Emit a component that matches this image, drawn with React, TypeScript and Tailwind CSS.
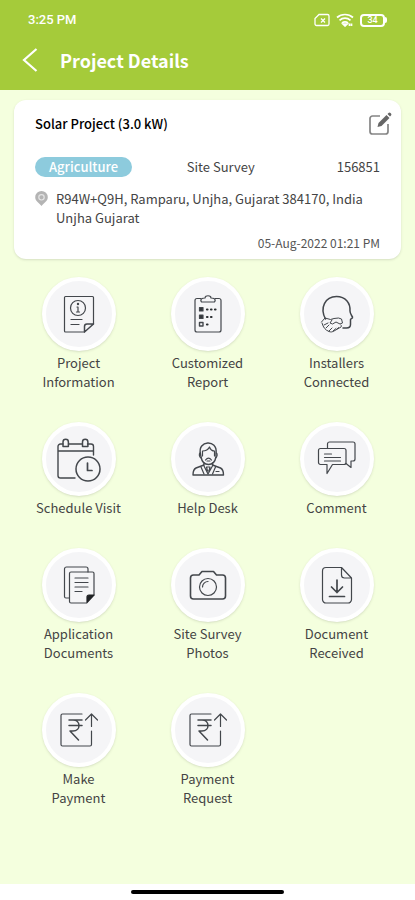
import type { ReactNode } from "react";

type Action = {
  label: string;
  icon: ReactNode;
};

function Glyph({ children }: { children: ReactNode }) {
  return (
    <svg
      aria-hidden
      viewBox="0 0 48 48"
      className="size-12"
      fill="none"
      stroke="#43474c"
      strokeWidth="1.2"
      strokeLinecap="round"
      strokeLinejoin="round"
    >
      {children}
    </svg>
  );
}

const infoIcon = (
  <Glyph>
    <path d="M29.500 42H10.500a1 1 0 0 1-1-1V7.500a1 1 0 0 1 1-1h27a1 1 0 0 1 1 1V34" />
    <path d="M29.500 42v-5.500a2.500 2.500 0 0 1 2.500-2.500h6.500z" strokeWidth="1.500" />
    <circle cx="23" cy="18" r="7.500" />
    <path d="M23 17v5M21.500 22h3M22 17h1" />
    <circle cx="23" cy="14" r="0.600" fill="#43474c" />
    <path d="M16 29.500h11M16 34.500h8" />
  </Glyph>
);

const reportIcon = (
  <Glyph>
    <path d="M17 8.500h-4a2 2 0 0 0-2 2V40a2 2 0 0 0 2 2h22a2 2 0 0 0 2-2V10.500a2 2 0 0 0-2-2h-4" />
    <path d="M17.500 12c-2-3 1-4 3.500-4 0-3 6-3 6 0 2.500 0 5.500 1 3.500 4z" />
    <path
      d="M15.500 17.500h3.500v3.500h-3.500zM15.500 25h3.500v3.500h-3.500z"
      fill="#33363a"
    />
    <path d="M15.500 32.500h3.500v3.500h-3.500z" strokeWidth="1.400" />
    <path
      d="M23 19.500h.5M27 19.500h.5M31 19.500h.5M23 27h.5M27 27h.5M23 34.500h.5"
      stroke="#2b2e31"
      strokeWidth="2.200"
    />
  </Glyph>
);

const installersIcon = (
  <Glyph>
    <path
      d="M12.500 29C6.500 18 12 6.500 23.500 6.500c9 0 14 6.500 13.500 14.500 0 2.500 1 3.500 2.500 6 .6 1.500-2 1.500-2 2.500v5c0 2.500-1.500 3.500-4 3.500H30"
      strokeWidth="1.500"
    />
    <path d="m8.500 32 3.500-4 5.500 1.500 3.500-1 4.500-.5 3 1 1 4-2.500 1-4-2-3.500 2-2.500-1 2-3" strokeWidth="1" />
    <path
      d="M9 33c1 4 3 7 7 8.500 2 .8 3 .5 5-.5l7-4c1-1 0-2 0-2M11 35l4-2M13 38l3-3M16 41l3-3M20 41l3-2.500M24 39l1.500-1.500"
      strokeWidth="1"
    />
  </Glyph>
);

const visitIcon = (
  <Glyph>
    <path
      d="M20 43H5.500A2.500 2.500 0 0 1 3 40.500v-29A2.500 2.500 0 0 1 5.500 9H8M13.500 9H27M32.500 9H36a2.500 2.500 0 0 1 2.500 2.500V20M3 16h35.500"
      strokeWidth="1.400"
    />
    <path d="M8 11.500V7a2.700 2.700 0 0 1 5.400 0v4.500zM27.500 11.500V7a2.700 2.700 0 0 1 5.400 0v4.500z" strokeWidth="1.500" />
    <circle cx="33" cy="34" r="12" strokeWidth="1.500" />
    <path d="M32.500 28v7.500H37" strokeWidth="1.700" />
  </Glyph>
);

const helpIcon = (
  <Glyph>
    <path
      d="M16.500 19C13 5 34 4 32 18v4c-1 5-4 7.500-7.500 7.500S18 27 17 22z"
      strokeWidth="1.400"
    />
    <path d="M18.500 21v-5c4 0 6-2 7-4 1 3 3 4 5 4v5M16 18c-1 1-1 4 1 5M32.500 18c1 1 1 4-1 5M21.500 25c2-2.500 4-2.500 6 0M23 26h3" />
    <path d="M20 28v2l-8 3c-2 1-3 4-3 7h30.500c0-3-1-6-3-7l-8-3v-2" strokeWidth="1.400" />
    <path d="m19.500 30 4.500 9 5-9M17 32l3 7M31.500 32l-3 7M22.500 32h3.500l-1 4h-1.500zM32 36.500h3" />
  </Glyph>
);

const commentIcon = (
  <Glyph>
    <path d="M14.500 13V9a2 2 0 0 1 2-2h23.500a2 2 0 0 1 2 2v15a2 2 0 0 1-2 2h-2v6.500L33 28.500" />
    <path d="M7.500 13.500H31a2 2 0 0 1 2 2V27.500a2 2 0 0 1-2 2H19.500L14 38.500v-9H7.500a2 2 0 0 1-2-2V15.500a2 2 0 0 1 2-2z" />
    <path d="M11.500 19h7M11.500 22.500h16M11.500 26h16" />
  </Glyph>
);

const documentsIcon = (
  <Glyph>
    <path d="M14 37h-3a1.500 1.500 0 0 1-1.500-1.500V8a2 2 0 0 1 2-2h19.500a2 2 0 0 1 2 2v3" />
    <path d="M31.500 42H16a1.500 1.500 0 0 1-1.500-1.500v-28A1.500 1.500 0 0 1 16 11h21.500a1.500 1.500 0 0 1 1.500 1.500V34" />
    <path d="M32 41.500V36a2 2 0 0 1 2-2h5z" fill="#202225" stroke="#202225" />
    <path d="M20 17h13M20 21.500h13M20 26h13M20 30.500h7" />
  </Glyph>
);

const cameraIcon = (
  <Glyph>
    <path
      d="M9.500 14h5.500l3-3.500h11.500l3 3.500h6a3 3 0 0 1 3 3V35a3 3 0 0 1-3 3h-29a3 3 0 0 1-3-3V17a3 3 0 0 1 3-3z"
      strokeWidth="1.600"
    />
    <circle cx="24" cy="26" r="8.500" />
    <path d="M18.500 26a5.500 5.500 0 0 1 5.500-5.500" />
  </Glyph>
);

const receivedIcon = (
  <Glyph>
    <path d="M28.500 6.500H13A3.500 3.500 0 0 0 9.500 10v28.500A3.500 3.500 0 0 0 13 42h22a3.500 3.500 0 0 0 3.500-3.500V17zM28.500 6.500V14a3 3 0 0 0 3 3h7" />
    <path d="M24 19v12.500M18.500 26l5.500 5.500 5.500-5.500M16.500 35.500h15" strokeWidth="1.700" />
  </Glyph>
);

const rupeeIcon = (
  <Glyph>
    <path d="M27 8H7.500a1.500 1.500 0 0 0-1.500 1.500v29A1.500 1.500 0 0 0 7.500 40H35a1.500 1.500 0 0 0 1.500-1.500V25M36.500 20.500V8.500M30.500 14l6-6 6 6" />
    <path
      d="M14 14h13M14 19.500h13M14 14h4c8 0 8 11 0 11h-3l8.500 9"
      strokeWidth="1.500"
    />
  </Glyph>
);

const actions: Action[] = [
  { label: "Project Information", icon: infoIcon },
  { label: "Customized Report", icon: reportIcon },
  { label: "Installers Connected", icon: installersIcon },
  { label: "Schedule Visit", icon: visitIcon },
  { label: "Help Desk", icon: helpIcon },
  { label: "Comment", icon: commentIcon },
  { label: "Application Documents", icon: documentsIcon },
  { label: "Site Survey Photos", icon: cameraIcon },
  { label: "Document Received", icon: receivedIcon },
  { label: "Make Payment", icon: rupeeIcon },
  { label: "Payment Request", icon: rupeeIcon },
];

function StatusBar() {
  return (
    <div className="flex h-10 items-center justify-between px-7 font-[Roboto,sans-serif] text-[13px] font-medium">
      <span>3:25 PM</span>
      <div className="flex items-center gap-1.5">
        <svg aria-hidden viewBox="0 0 16 13" className="h-3.5 w-4" fill="none" stroke="currentColor" strokeWidth="1.300">
          <path d="M5 1h8.500a1.500 1.500 0 0 1 1.500 1.500v8a1.500 1.500 0 0 1-1.500 1.500h-11A1.500 1.500 0 0 1 1 10.500V5z" />
          <path d="m7 5 4 4M11 5 7 9" />
        </svg>
        <svg aria-hidden viewBox="0 0 18 14" className="h-3.5 w-[18px]" fill="none" stroke="currentColor" strokeWidth="1.700">
          <path d="M1 4.500c4.500-4 11.500-4 16 0M3.500 7.300c3.200-2.800 7.800-2.800 11 0M6 10c2-1.600 4-1.600 6 0" />
          <path d="m9 13-2-2h4zM13.500 10.500v2.500M15.500 10.500v2.500" />
        </svg>
        <span className="flex items-center">
          <span className="flex h-[13px] w-[25px] items-center justify-center rounded border-2 border-white text-[9px] leading-none font-medium">
            34
          </span>
          <span className="h-1.5 w-0.5 rounded-r bg-white" />
        </span>
      </div>
    </div>
  );
}

function ProjectCard() {
  return (
    <section className="mx-3.5 mt-2.5 flex flex-col rounded-xl bg-white px-[21px] pt-3 pb-1.5 shadow-sm">
      <div className="flex items-center justify-between">
        <h2 className="text-[13px] leading-6 font-medium text-black">Solar Project (3.0 kW)</h2>
        <button type="button" aria-label="Edit project" className="-mr-3">
          <svg aria-hidden viewBox="0 0 24 24" className="size-6" fill="none" stroke="#858585" strokeWidth="1.700">
            <path d="M12 4H4.500A2.500 2.500 0 0 0 2 6.500v13A2.500 2.500 0 0 0 4.500 22h13a2.500 2.500 0 0 0 2.500-2.500V12" />
            <path d="m9.500 15 1-4 8-8 3 3-8 8zM19.500 2l1-1a1.500 1.500 0 0 1 2 0l.5.500a1.500 1.500 0 0 1 0 2l-1 1z" fill="#666" stroke="none" />
          </svg>
        </button>
      </div>
      <div className="mt-[21px] grid grid-cols-[44%_1fr_auto] items-center text-[13px] leading-5">
        <span className="justify-self-start rounded-full bg-[#8dcbdd] px-3.5 font-medium text-white">
          Agriculture
        </span>
        <span>Site Survey</span>
        <span>156851</span>
      </div>
      <div className="mt-3 flex gap-2 text-[13px] leading-[19px]">
        <svg aria-hidden viewBox="0 0 13 15" className="mt-0.5 h-[15px] w-[13px] shrink-0">
          <path d="M6.500 0a6.300 6.300 0 0 1 6.300 6.300c0 4-4.300 6-6.300 8.700-2-2.700-6.300-4.700-6.300-8.700A6.300 6.300 0 0 1 6.500 0z" fill="#b4b4b4" />
          <circle cx="6.500" cy="6.300" r="2.700" fill="none" stroke="#e4e4e4" strokeWidth="1.200" />
        </svg>
        <address className="not-italic">
          R94W+Q9H, Ramparu, Unjha, Gujarat 384170, India
          <br />
          Unjha Gujarat
        </address>
      </div>
      <time dateTime="2022-08-05T13:21" className="mt-1.5 text-right text-xs leading-5 text-[#555]">
        05-Aug-2022 01:21 PM
      </time>
    </section>
  );
}

export default function App() {
  return (
    <div className="flex min-h-screen flex-col bg-[#f4ffde] font-['Noto_Sans_CJK_SC',sans-serif] text-[#444]">
      <header className="bg-[#a5cb3a] text-white">
        <StatusBar />
        <div className="flex h-[50px] items-start gap-5 px-5">
          <button type="button" aria-label="Go back" className="flex h-10 items-center">
            <svg aria-hidden viewBox="0 0 20 26" className="h-[26px] w-5" fill="none" stroke="currentColor" strokeWidth="2.200">
              <path d="M16.500 2 4 13l12.500 11" />
            </svg>
          </button>
          <h1 className="text-lg leading-10 font-bold">Project Details</h1>
        </div>
      </header>

      <main className="flex-1">
        <ProjectCard />
        <nav aria-label="Project actions" className="mt-[18px] grid grid-cols-3 gap-y-[31px] px-3.5">
          {actions.map(({ label, icon }) => (
            <a key={label} href="#" className="flex flex-col items-center gap-0.5">
              <span className="flex size-[74px] items-center justify-center rounded-full border-4 border-white bg-[#f5f5f7] shadow-sm">
                {icon}
              </span>
              <span className="max-w-[86px] text-center text-[13px] leading-[19px]">{label}</span>
            </a>
          ))}
        </nav>
      </main>

      <footer className="flex h-4 items-center justify-center bg-white">
        <span className="h-1 w-[37%] rounded-full bg-black" />
      </footer>
    </div>
  );
}
